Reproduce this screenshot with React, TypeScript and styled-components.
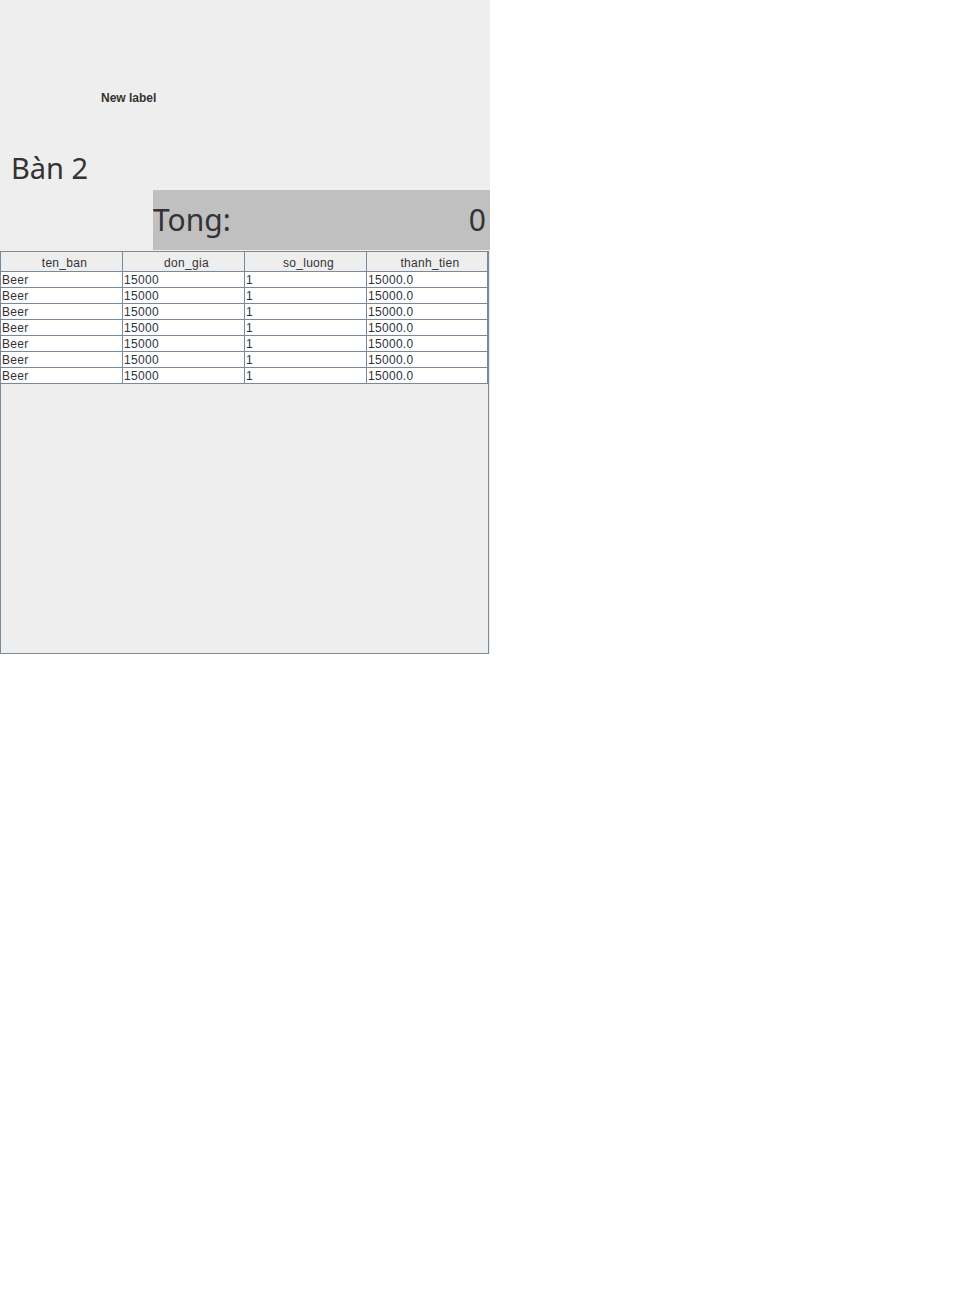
import * as React from 'react'
import styled, { createGlobalStyle } from 'styled-components'

const GlobalStyle = createGlobalStyle`
  body {
    margin: 0;
    background: #ffffff;
    font-family: 'Liberation Sans', Arial, sans-serif;
  }
`

const Frame = styled.div`
  width: 490px;
  height: 654px;
  background: #eeeeee;
  display: flex;
  flex-direction: column;
  color: #333333;
`

const Heading = styled.div`
  height: 190px;
  display: flex;
  flex-direction: column;
`

const SmallLabel = styled.div`
  margin: 91px 0 0 101px;
  font: bold 12px/15px 'Liberation Sans', Arial, sans-serif;
`

const TableName = styled.div`
  margin: 45px 0 0 11px;
  font: 29px/34px 'Noto Sans', 'DejaVu Sans', sans-serif;
`

const TotalRow = styled.div`
  display: flex;
  padding-left: 153px;
`

const TotalBox = styled.div`
  flex: 1;
  height: 60px;
  background: #c0c0c0;
  display: flex;
  align-items: center;
  justify-content: space-between;
  padding-right: 4px;
  font: 30px/36px 'Noto Sans', 'DejaVu Sans', sans-serif;
`

const ScrollPane = styled.div`
  margin-top: 1px;
  width: 487px;
  height: 401px;
  border: 1px solid #7a8a99;
  background: #eeeeee;
`

const Grid = styled.div`
  display: grid;
  grid-template-columns: 122px 122px 122px 121px;
  font-size: 12px;
  font-family: 'Liberation Sans', Arial, sans-serif;
  letter-spacing: 0.3px;
`

const HeadCell = styled.div`
  height: 19px;
  line-height: 22px;
  padding-left: 6px;
  text-align: center;
  background: #eeeeee;
  border-right: 1px solid #7a8a99;
  border-bottom: 1px solid #7a8a99;
`

const Cell = styled.div`
  height: 15px;
  line-height: 17px;
  padding-left: 1px;
  background: #ffffff;
  border-right: 1px solid #7a8a99;
  border-bottom: 1px solid #7a8a99;
  white-space: nowrap;
  overflow: hidden;
`

const columns = ['ten_ban', 'don_gia', 'so_luong', 'thanh_tien']

const rows = Array.from({ length: 7 }, () => ['Beer', '15000', '1', '15000.0'])

export default function App() {
  return (
    <>
      <GlobalStyle />
      <Frame>
        <Heading>
          <SmallLabel>New label</SmallLabel>
          <TableName>Bàn 2</TableName>
        </Heading>
        <TotalRow>
          <TotalBox>
            <span>Tong:</span>
            <span>0</span>
          </TotalBox>
        </TotalRow>
        <ScrollPane>
          <Grid>
            {columns.map(c => (
              <HeadCell key={c}>{c}</HeadCell>
            ))}
            {rows.map((r, i) =>
              r.map((v, j) => <Cell key={`${i}-${j}`}>{v}</Cell>)
            )}
          </Grid>
        </ScrollPane>
      </Frame>
    </>
  )
}
